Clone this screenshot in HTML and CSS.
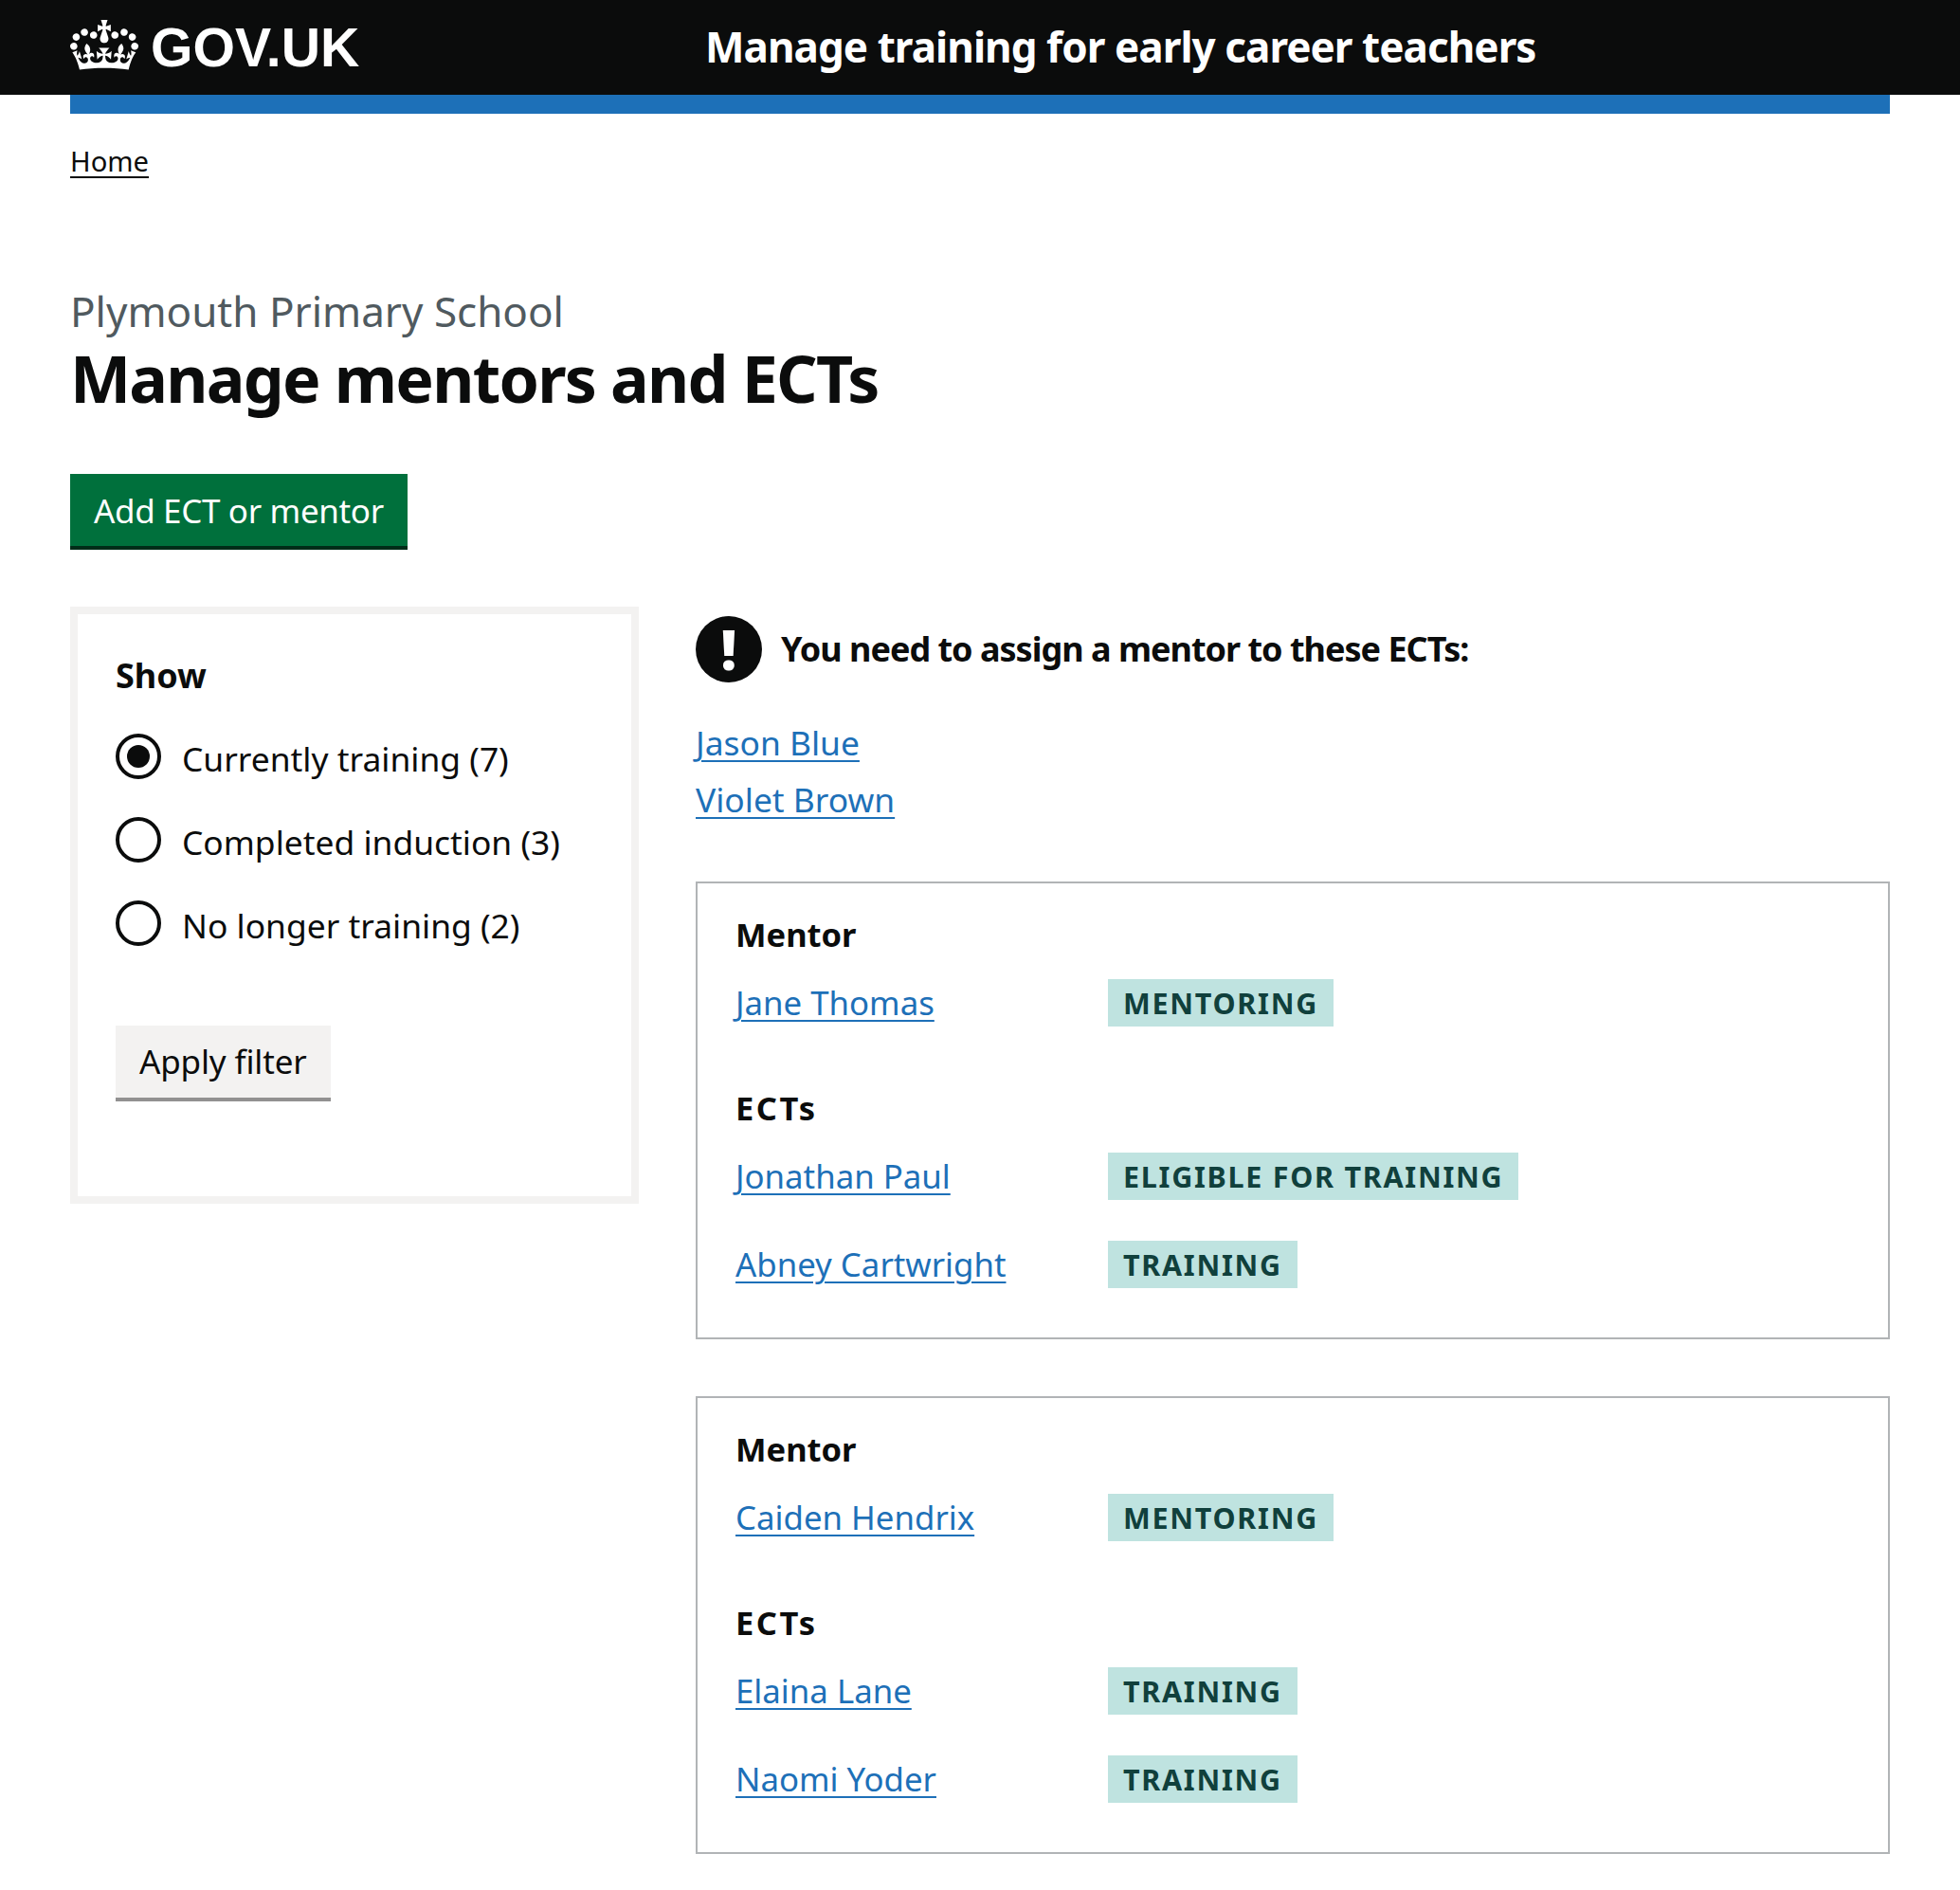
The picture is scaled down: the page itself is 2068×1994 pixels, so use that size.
FILE: index.html
```html
<!DOCTYPE html>
<html lang="en">
<head>
<meta charset="utf-8">
<title>Manage mentors and ECTs</title>
<link rel="stylesheet" href="styles.css">
</head>
<body>
<header class="header">
  <a class="logo" href="#">
    <svg class="crown" viewBox="0 0 132 97" aria-hidden="true"><path fill="#fff" d="M25 30.2c3.5 1.5 7.7-.2 9.1-3.7 1.5-3.6-.2-7.8-3.9-9.2-3.6-1.4-7.6.3-9.1 3.9-1.4 3.5.3 7.5 3.9 9zM9 39.5c3.6 1.5 7.8-.2 9.2-3.7 1.5-3.6-.2-7.8-3.9-9.1-3.6-1.5-7.6.2-9.1 3.8-1.4 3.5.3 7.5 3.8 9zM4.4 57.2c3.5 1.5 7.7-.2 9.1-3.8 1.5-3.6-.2-7.7-3.9-9.1-3.5-1.5-7.6.3-9.1 3.8-1.4 3.5.3 7.6 3.9 9.1zm38.3-21.4c3.5 1.5 7.7-.2 9.1-3.8 1.5-3.6-.2-7.7-3.9-9.1-3.6-1.5-7.6.3-9.1 3.8-1.3 3.6.4 7.7 3.9 9.1zm64.4-5.6c-3.6 1.5-7.8-.2-9.1-3.7-1.5-3.6.2-7.8 3.8-9.2 3.6-1.4 7.7.3 9.2 3.9 1.3 3.5-.4 7.5-3.9 9zm15.9 9.3c-3.6 1.5-7.7-.2-9.1-3.7-1.5-3.6.2-7.8 3.7-9.1 3.6-1.5 7.7.2 9.2 3.8 1.5 3.5-.3 7.5-3.8 9zm4.7 17.7c-3.6 1.5-7.8-.2-9.2-3.8-1.5-3.6.2-7.7 3.9-9.1 3.6-1.5 7.7.3 9.2 3.8 1.3 3.5-.4 7.6-3.9 9.1zM89.3 35.8c-3.6 1.5-7.8-.2-9.2-3.8-1.4-3.6.2-7.7 3.9-9.1 3.6-1.5 7.7.3 9.2 3.8 1.4 3.6-.3 7.7-3.9 9.1zM69.7 17.7l8.9 4.7V9.3l-8.9 2.8c-.2-.3-.5-.6-.9-.9L72.4 0H59.6l3.5 11.2c-.3.3-.6.5-.9.9l-8.8-2.8v13.1l8.8-4.7c.3.3.6.7.9.9l-5 15.4v.1c-.2.8-.4 1.6-.4 2.4 0 4.1 3.1 7.5 7 8.1h.2c.3 0 .7.1 1 .1.4 0 .7 0 1-.1h.2c4-.6 7.1-4.1 7.1-8.1 0-.8-.1-1.7-.4-2.4V34l-5.1-15.4c.4-.2.7-.6 1-.9zM66 92.8c16.9 0 32.8 1.1 47.1 3.2 4-16.9 8.9-26.7 14-33.5l-9.6-3.4c1 4.9 1.1 7.2 0 10.2-1.5-1.4-3-4.3-4.2-8.7L108.6 76c2.8-2 5-3.2 7.5-3.3-4.4 9.4-10 11.9-13.6 11.2-4.3-.8-6.3-4.6-5.6-7.9 1-4.7 5.7-5.9 8-.5 4.3-8.7-3-11.4-7.6-8.8 7.1-7.2 7.9-13.5 2.1-21.1-8 6.1-8.1 12.3-4.5 20.8-4.7-5.4-12.1-2.5-9.5 6.2 3.4-5.2 7.9-2 7.2 3.1-.6 4.3-6.4 7.8-13.5 7.2-10.3-.9-10.9-8-11.2-13.8 2.5-.5 7.1 1.8 11 7.3L80.2 60c-4.1 4.4-8 5.3-12.3 5.4 1.4-4.4 8-11.6 8-11.6H55.5s6.4 7.2 7.9 11.6c-4.2-.1-8-1-12.3-5.4l1.4 16.4c3.9-5.5 8.5-7.7 10.9-7.3-.3 5.8-.9 12.8-11.1 13.8-7.2.6-12.9-2.9-13.5-7.2-.7-5 3.8-8.3 7.1-3.1 2.7-8.7-4.6-11.6-9.4-6.2 3.7-8.5 3.6-14.7-4.6-20.8-5.8 7.6-5 13.9 2.2 21.1-4.7-2.6-11.9.1-7.7 8.8 2.3-5.5 7.1-4.2 8.1.5.7 3.3-1.3 7.1-5.7 7.9-3.5.7-9-1.8-13.5-11.2 2.5.1 4.7 1.3 7.5 3.3l-4.7-15.4c-1.2 4.4-2.7 7.2-4.3 8.7-1.1-3-.9-5.3 0-10.2l-9.5 3.4c5 6.9 9.9 16.7 14 33.5 14.8-2.1 30.8-3.2 47.7-3.2z"/></svg>
    <span class="logo-text">GOV.UK</span>
  </a>
  <a class="service" href="#">Manage training for early career teachers</a>
</header>
<div class="wrap">
  <div class="bluebar"></div>
  <nav class="crumbs"><a href="#">Home</a></nav>
  <main>
    <p class="caption">Plymouth Primary School</p>
    <h1 class="title">Manage mentors and ECTs</h1>
    <a class="btn btn-green" href="#">Add ECT or mentor</a>
    <div class="columns">
      <form class="filter">
        <p class="filter-title">Show</p>
        <div class="radios">
          <div class="radio"><span class="dot dot-on"></span><span class="radio-label">Currently training (7)</span></div>
          <div class="radio"><span class="dot"></span><span class="radio-label">Completed induction (3)</span></div>
          <div class="radio"><span class="dot"></span><span class="radio-label">No longer training (2)</span></div>
        </div>
        <a class="btn btn-grey" href="#">Apply filter</a>
      </form>
      <section class="content">
        <div class="warning">
          <span class="warn-icon">!</span>
          <strong class="warn-text">You need to assign a mentor to these ECTs:</strong>
        </div>
        <ul class="assign">
          <li><a href="#">Jason Blue</a></li>
          <li><a href="#">Violet Brown</a></li>
        </ul>
        <article class="card">
          <h2 class="card-h card-h-first">Mentor</h2>
          <div class="row"><a href="#">Jane Thomas</a><span class="tag">MENTORING</span></div>
          <h2 class="card-h card-h-ects">ECTs</h2>
          <div class="row"><a href="#">Jonathan Paul</a><span class="tag">ELIGIBLE FOR TRAINING</span></div>
          <div class="row row-next"><a href="#">Abney Cartwright</a><span class="tag">TRAINING</span></div>
        </article>
        <article class="card">
          <h2 class="card-h card-h-first">Mentor</h2>
          <div class="row"><a href="#">Caiden Hendrix</a><span class="tag">MENTORING</span></div>
          <h2 class="card-h card-h-ects">ECTs</h2>
          <div class="row"><a href="#">Elaina Lane</a><span class="tag">TRAINING</span></div>
          <div class="row row-next"><a href="#">Naomi Yoder</a><span class="tag">TRAINING</span></div>
        </article>
      </section>
    </div>
  </main>
</div>
</body>
</html>
```
FILE: styles.css
```css
* { box-sizing: border-box; }
html, body { margin: 0; padding: 0; }
body {
  background: #fff;
  color: #0b0c0c;
  font-family: "Noto Sans", Arial, sans-serif;
  font-size: 26px;
  line-height: 36px;
  height: 1994px;
  overflow: hidden;
}
a { color: #1d70b8; text-underline-offset: 5px; text-decoration-thickness: 2px; }
.header {
  height: 100px;
  background: #0b0c0c;
  padding-left: 74px;
  display: flex;
  align-items: center;
}
.logo { display: flex; align-items: center; gap: 13px; color: #fff; text-decoration: none; width: 670px; flex: none; }
.crown { width: 72px; height: 53px; display: block; margin-top: -5px; }
.logo-text { font-family: "Liberation Sans", Arial, sans-serif; font-weight: 700; font-size: 57.2px; line-height: 60px; }
.service { color: #fff; text-decoration: none; font-weight: 700; font-size: 44px; line-height: 60px; letter-spacing: -0.95px; margin-top: -2px; }
.wrap { margin: 0 74px; }
.bluebar { height: 20px; background: #1d70b8; }
.crumbs { padding-top: 30px; font-size: 29.2px; line-height: 40px; }
.crumbs a { color: #0b0c0c; }
.caption { margin: 110px 0 0; color: #505a5f; font-size: 44px; line-height: 56px; }
.title { margin: 0; font-size: 68px; line-height: 86px; font-weight: 700; letter-spacing: -1.75px; }
.btn {
  display: inline-block;
  text-decoration: none;
  font-size: 35px;
  line-height: 50px;
  height: 80px;
  border-bottom: 4px solid;
}
.btn-green { background: #00703c; color: #fff; border-color: #002d18; margin-top: 58px; letter-spacing: -0.35px; padding: 14px 25px 8px; }
.btn-grey { background: #f3f2f1; color: #0b0c0c; border-color: #929191; letter-spacing: -0.15px; padding: 13px 25px 9px; }
.columns { display: flex; align-items: flex-start; gap: 60px; margin-top: 60px; }
.filter {
  flex: none;
  width: 600px;
  height: 630px;
  border: 8px solid #f3f2f1;
  padding: 40px;
}
.filter-title { margin: 0; font-weight: 700; font-size: 36px; line-height: 50px; }
.radios { margin-top: 36px; display: flex; flex-direction: column; gap: 40px; margin-bottom: 84px; }
.radio { display: flex; align-items: center; gap: 22px; height: 48px; font-size: 35.4px; line-height: 48px; }
.radio-label { padding-top: 4px; }
.dot { flex: none; width: 48px; height: 48px; border-radius: 50%; border: 4px solid #0b0c0c; position: relative; }
.dot-on::after { content: ""; position: absolute; left: 8px; top: 8px; width: 24px; height: 24px; border-radius: 50%; background: #0b0c0c; }
.content { flex: 1; min-width: 0; padding-top: 10px; }
.warning { display: flex; align-items: center; gap: 20px; height: 70px; }
.warn-icon {
  flex: none; width: 70px; height: 70px; border-radius: 50%;
  background: #0b0c0c; color: #fff; font-weight: 900;
  font-size: 58px; line-height: 70px; text-align: center;
}
.warn-text { font-size: 36px; line-height: 50px; letter-spacing: -1px; }
.assign { list-style: none; margin: 33px 0 0; padding: 0; font-size: 35.4px; line-height: 60px; }
.card {
  border: 2px solid #b1b4b6;
  padding: 29px 40px 0;
  height: 483px;
  margin-bottom: 60px;
  margin-top: 57px;
}
.card + .card { margin-top: 0; }
.card-h { margin: 48px 0 0; font-size: 34.5px; line-height: 50px; font-weight: 700; }
.card-h-first { margin-top: 0; }
.card-h-ects { margin-top: 61px; letter-spacing: 2.5px; }
.row { display: grid; grid-template-columns: 393px auto; justify-content: start; align-items: center; height: 50px; margin-top: 22px; font-size: 34.8px; line-height: 50px; }
.row-next { margin-top: 43px; }
.tag {
  justify-self: start;
  background: #bfe3e0;
  color: #10403c;
  font-weight: 700;
  font-size: 30.5px;
  line-height: 50px;
  height: 50px;
  padding: 0 16px;
  letter-spacing: 1.72px;
}
```
